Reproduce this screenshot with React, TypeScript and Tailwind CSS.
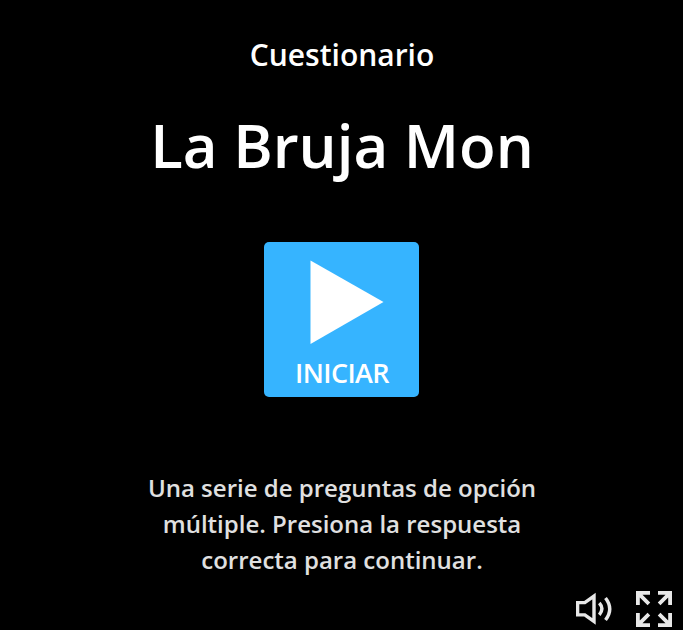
export default function App() {
  return (
    <main className="flex h-[630px] w-[683px] flex-col items-center overflow-hidden bg-black pl-px font-['Open_Sans','Noto_Sans',sans-serif] font-semibold text-white">
      <h2 className="mt-[35px] text-[30px] leading-[40px]">Cuestionario</h2>
      <h1 className="mt-[30px] text-[60px] leading-[80px]">La Bruja Mon</h1>
      <button className="mr-px mt-[57px] flex h-[155px] w-[155px] flex-col items-center rounded-[5px] bg-[#36b4ff] pl-px pt-[18px]">
        <svg className="ml-[10px] h-[84px] w-[74px] shrink-0" viewBox="0 0 74 84" fill="white"><path d="M0.500 0.500 73.500 42 0.500 84Z" /></svg>
        <span className="mt-[11px] text-[27px] leading-[36px] tracking-[-0.6px]">INICIAR</span>
      </button>
      <p className="mt-[73px] w-[400px] text-center text-[24px] leading-[36px] text-[#e0e0e0]">
        Una serie de preguntas de opción múltiple. Presiona la respuesta correcta para continuar.
      </p>
      <footer className="mt-[13px] flex w-full justify-end gap-[24px] pr-[11px]">
        <svg className="h-[36px] w-[36px]" viewBox="0 0 36 36" fill="none" stroke="#e8e8e8" strokeWidth="3.400"><path d="M1.600 11.600h7.200L18 5v25.500l-9.200-6.600H1.600ZM23.300 12q5.200 5.700 0 11.800M29.500 7q8.500 11 0 22" /></svg>
        <svg className="h-[36px] w-[36px]" viewBox="0 0 36 36" fill="none" stroke="#e8e8e8" strokeWidth="3.800"><path d="M1.900 14V1.900H14M1.900 1.900l11 11M22 1.900h12.100V14M34.100 1.900l-11 11M1.900 22v12.100H14M1.900 34.100l11-11M22 34.100h12.100V22M34.100 34.100l-11-11" /></svg>
      </footer>
    </main>
  );
}
